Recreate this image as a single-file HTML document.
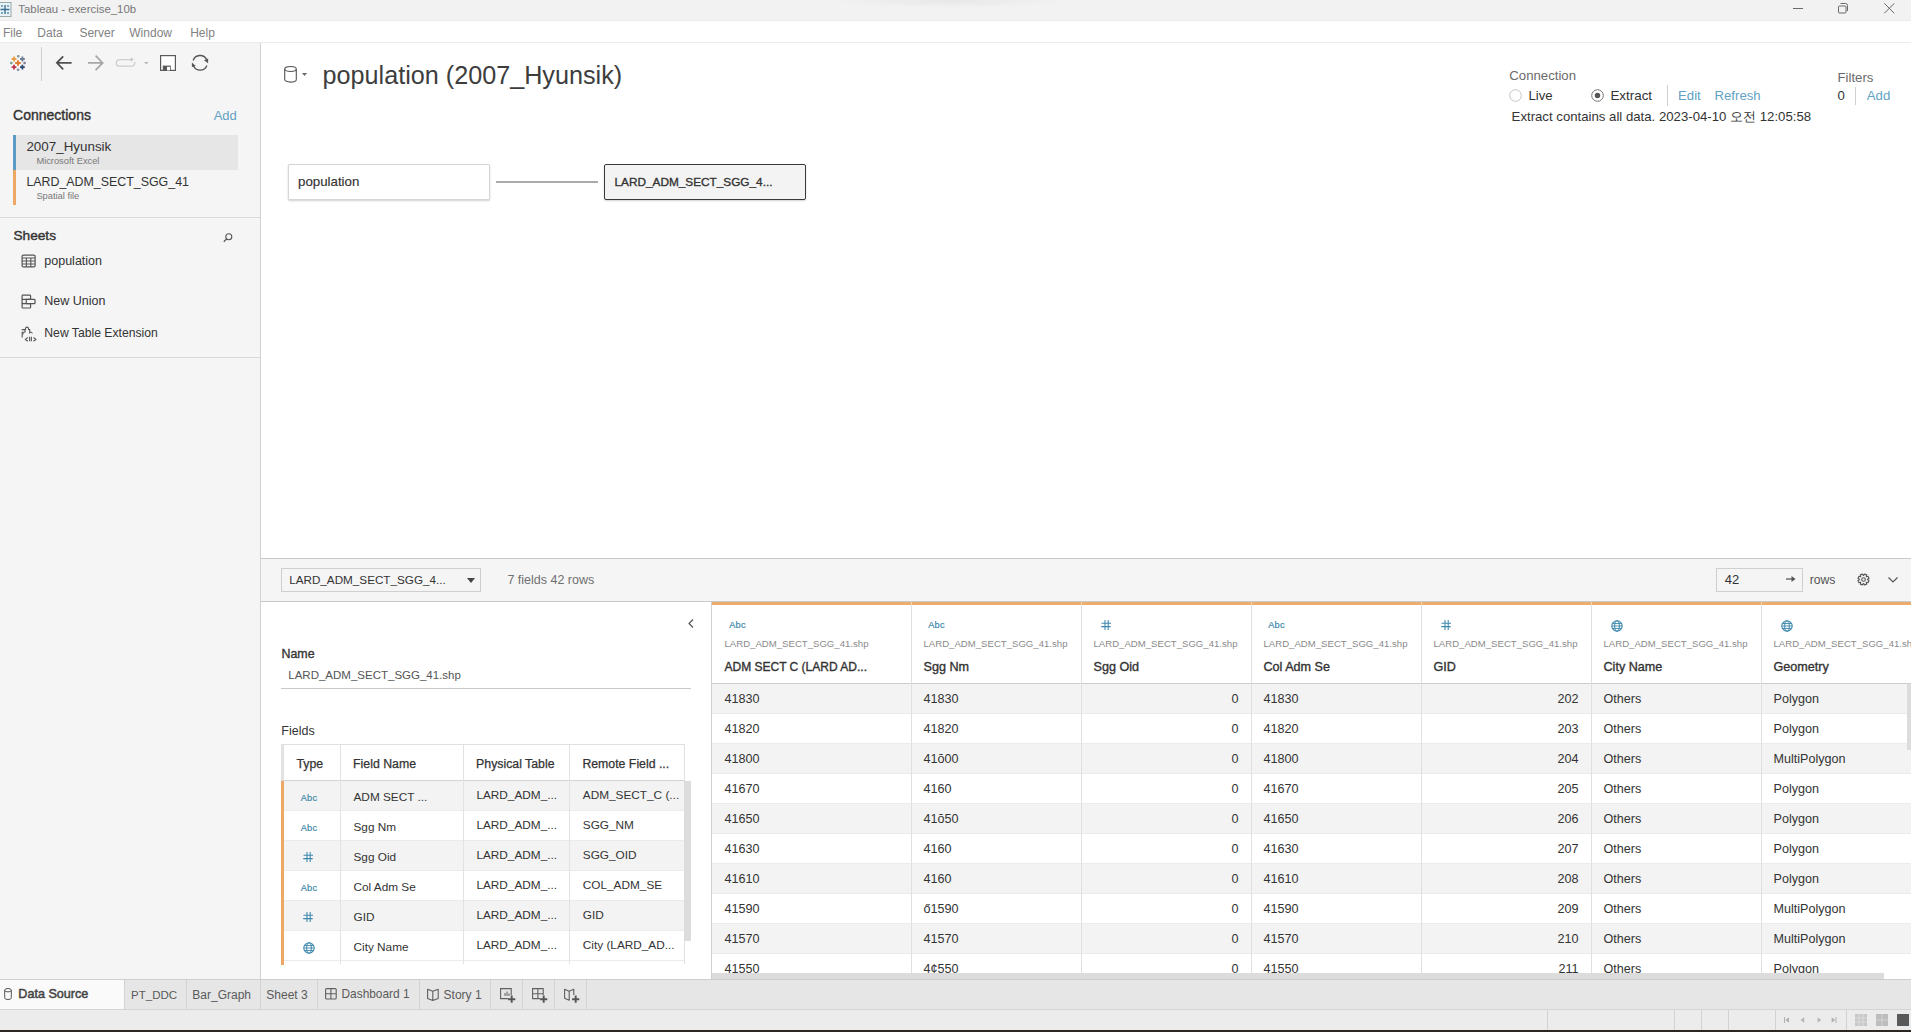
<!DOCTYPE html>
<html><head><meta charset="utf-8">
<style>
*{box-sizing:border-box;margin:0;padding:0}
html,body{width:1911px;height:1032px;overflow:hidden;background:#fff;font-family:"Liberation Sans",sans-serif;color:#333}
.a{position:absolute;white-space:nowrap}
svg.a{overflow:visible}
</style></head>
<body>

<div class="a" style="left:0px;top:0px;width:1911px;height:21px;background:#f2f2f2"></div>
<div class="a" style="left:830px;top:-6px;width:240px;height:14px;border-radius:50%;background:radial-gradient(ellipse at center, rgba(0,0,0,0.045), rgba(0,0,0,0) 70%)"></div>
<div class="a" style="left:0px;top:20px;width:1911px;height:1px;background:#ececec"></div>
<svg class="a" style="left:0px;top:2px;" width="12" height="16" viewBox="0 0 12 16"><rect x="-2" y="0.5" width="13" height="14" fill="#e6f2f8" stroke="#9aa" stroke-width="1"/><g stroke="#3d6f91" stroke-width="1.4"><path d="M5 3v9M0.5 7.5h9"/></g><g fill="#5a8fb0"><circle cx="2" cy="4" r="1"/><circle cx="8" cy="4" r="1"/><circle cx="2" cy="11" r="1"/><circle cx="8" cy="11" r="1"/></g></svg>
<div class="a" style="left:18.3px;top:4.35px;font-size:11.4px;line-height:11.4px;font-weight:400;color:#777;">Tableau - exercise_10b</div>
<div class="a" style="left:1793px;top:8px;width:10px;height:1px;background:#6a6a6a"></div>
<svg class="a" style="left:1837px;top:3px;" width="12" height="11" viewBox="0 0 12 11"><rect x="1.5" y="3" width="7.5" height="7" rx="1" fill="none" stroke="#6a6a6a" stroke-width="1"/><path d="M3.5 0.5h5a2 2 0 0 1 2 2v5.5" fill="none" stroke="#6a6a6a" stroke-width="1"/></svg>
<svg class="a" style="left:1884px;top:3px;" width="11" height="11" viewBox="0 0 11 11"><path d="M0.3 0.3l10 10M10.3 0.3l-10 10" stroke="#6a6a6a" stroke-width="1"/></svg>
<div class="a" style="left:0px;top:21px;width:1911px;height:21px;background:#fff"></div>
<div class="a" style="left:0px;top:42px;width:1911px;height:1px;background:#ebebeb"></div>
<div class="a" style="left:2.9px;top:26.54px;font-size:12px;line-height:12px;font-weight:400;color:#828282;">File</div>
<div class="a" style="left:37.3px;top:26.54px;font-size:12px;line-height:12px;font-weight:400;color:#828282;">Data</div>
<div class="a" style="left:79.4px;top:26.54px;font-size:12px;line-height:12px;font-weight:400;color:#828282;">Server</div>
<div class="a" style="left:129.3px;top:26.54px;font-size:12px;line-height:12px;font-weight:400;color:#828282;">Window</div>
<div class="a" style="left:190.2px;top:26.54px;font-size:12px;line-height:12px;font-weight:400;color:#828282;">Help</div>
<div class="a" style="left:0px;top:43px;width:260px;height:936px;background:#f5f5f5"></div>
<div class="a" style="left:260px;top:43px;width:1px;height:936px;background:#d2d2d2"></div>
<svg class="a" style="left:9px;top:54px;" width="18" height="18" viewBox="0 0 18 18"><path d="M6.2 9h5.6M9 6.2v5.6" stroke="#e07a30" stroke-width="1.9"/><path d="M2.6 5h4.8M5 2.6v4.8" stroke="#eaa046" stroke-width="1.8"/><path d="M11.0 5h4.8M13.4 2.6v4.8" stroke="#6b8196" stroke-width="1.8"/><path d="M2.6 13.2h4.8M5 10.799999999999999v4.8" stroke="#c2344d" stroke-width="1.8"/><path d="M11.0 13.2h4.8M13.4 10.799999999999999v4.8" stroke="#2e4a73" stroke-width="1.8"/><path d="M8.0 2.3h2.6M9.3 0.9999999999999998v2.6" stroke="#7c9aa0" stroke-width="1.5"/><path d="M0.9999999999999998 9h2.6M2.3 7.7v2.6" stroke="#7d9a92" stroke-width="1.5"/><path d="M14.299999999999999 9h2.6M15.6 7.7v2.6" stroke="#857d95" stroke-width="1.5"/><path d="M7.8 15.8h2.6M9.1 14.5v2.6" stroke="#8a8fa2" stroke-width="1.5"/></svg>
<div class="a" style="left:41px;top:47px;width:1px;height:34px;background:#cfcfcf"></div>
<svg class="a" style="left:55px;top:55px;" width="18" height="16" viewBox="0 0 18 16"><path d="M2 7.8h14.6M8.2 1.3L1.9 7.8l6.3 6.5" fill="none" stroke="#505050" stroke-width="1.8"/></svg>
<svg class="a" style="left:87px;top:54px;" width="18" height="18" viewBox="0 0 18 18"><path d="M1 8.9h14.6M8.6 1.6l7.1 7.3-7.1 7.3" fill="none" stroke="#a6a6a6" stroke-width="1.7"/></svg>
<svg class="a" style="left:115px;top:57px;" width="22" height="11" viewBox="0 0 22 11"><path d="M16.5 2.6H4.6a3.3 3.3 0 0 0 0 6.6h11.8a3.3 3.3 0 0 0 3.2-4.4" fill="none" stroke="#cdcdcd" stroke-width="1.3"/><path d="M15.8 0.4l3 2.2-3 2.2z" fill="#c4c4c4"/></svg>
<svg class="a" style="left:144px;top:62px;" width="5" height="3" viewBox="0 0 5 3"><path d="M0 0h4.6l-2.3 2.6z" fill="#b8b8b8"/></svg>
<svg class="a" style="left:160px;top:55px;" width="16" height="16" viewBox="0 0 16 16"><rect x="0.6" y="0.6" width="14.8" height="14.8" fill="#fff" stroke="#5a5a5a" stroke-width="1.2"/><rect x="2.8" y="10.6" width="8" height="5" fill="#5a5a5a"/><rect x="7" y="11.8" width="3" height="3.6" fill="#fff"/></svg>
<svg class="a" style="left:191px;top:55px;" width="18" height="17" viewBox="0 0 18 17"><path d="M2.1 5.5A7.3 7.3 0 0 1 15.6 4.6" fill="none" stroke="#555" stroke-width="1.3"/><path d="M15.9 10.5A7.3 7.3 0 0 1 2.3 10.6" fill="none" stroke="#555" stroke-width="1.3"/><path d="M13 5.2L17.1 3.6 17.1 8.2z" fill="#555"/><path d="M0.9 7.6v4.4l3.8-1z" fill="#555"/></svg>
<div class="a" style="left:13.1px;top:107.85px;font-size:14px;line-height:14px;font-weight:400;color:#333;-webkit-text-stroke:0.35px #333;-webkit-text-stroke:0.4px #333">Connections</div>
<div class="a" style="left:213.7px;top:109.40px;font-size:13px;line-height:13px;font-weight:400;color:#62a2c4;">Add</div>
<div class="a" style="left:16px;top:135px;width:222px;height:35px;background:#e6e6e6"></div>
<div class="a" style="left:13px;top:135px;width:3px;height:35px;background:#5b9bc4"></div>
<div class="a" style="left:13px;top:170px;width:3px;height:35px;background:#eda865"></div>
<div class="a" style="left:26.4px;top:139.56px;font-size:13.4px;line-height:13.4px;font-weight:400;color:#333;">2007_Hyunsik</div>
<div class="a" style="left:36.4px;top:156.83px;font-size:9.3px;line-height:9.3px;font-weight:400;color:#777;">Microsoft Excel</div>
<div class="a" style="left:26.4px;top:175.80px;font-size:12.4px;line-height:12.4px;font-weight:400;color:#333;">LARD_ADM_SECT_SGG_41</div>
<div class="a" style="left:36.4px;top:191.53px;font-size:9.3px;line-height:9.3px;font-weight:400;color:#777;">Spatial file</div>
<div class="a" style="left:0px;top:217px;width:260px;height:1px;background:#d9d9d9"></div>
<div class="a" style="left:13.4px;top:229.20px;font-size:13.7px;line-height:13.7px;font-weight:400;color:#333;-webkit-text-stroke:0.35px #333;-webkit-text-stroke:0.4px #333">Sheets</div>
<svg class="a" style="left:223px;top:233px;" width="10" height="10" viewBox="0 0 10 10"><circle cx="5.8" cy="3.8" r="3" fill="none" stroke="#555" stroke-width="1.1"/><path d="M3.7 5.9L0.8 8.8" stroke="#555" stroke-width="1.3"/></svg>
<svg class="a" style="left:21px;top:254px;" width="15" height="14" viewBox="0 0 15 14"><rect x="1.1" y="1.1" width="13" height="11.8" rx="1.2" fill="none" stroke="#555" stroke-width="1.2"/><path d="M1.1 4h13M1.1 7h13M1.1 10h13M5.4 4v9M9.8 4v9" stroke="#555" stroke-width="1.1"/></svg>
<div class="a" style="left:44.3px;top:254.52px;font-size:12.5px;line-height:12.5px;font-weight:400;color:#333;">population</div>
<svg class="a" style="left:21px;top:294px;" width="16" height="15" viewBox="0 0 16 15"><rect x="1.1" y="1.1" width="8.5" height="4.3" rx="0.8" fill="none" stroke="#555" stroke-width="1.2"/><rect x="5.2" y="5.4" width="8.8" height="4.3" rx="0.8" fill="none" stroke="#555" stroke-width="1.2"/><rect x="1.1" y="9.7" width="8.5" height="4.3" rx="0.8" fill="none" stroke="#555" stroke-width="1.2"/><path d="M1.1 5v5" stroke="#555" stroke-width="1.2"/></svg>
<div class="a" style="left:44.3px;top:295.42px;font-size:12.5px;line-height:12.5px;font-weight:400;color:#333;">New Union</div>
<svg class="a" style="left:21px;top:326px;" width="17" height="16" viewBox="0 0 17 16"><path d="M1.2 11.5V6.2h1.8a1.2 1.2 0 0 0 0-2.4H1.2V3.5h3.3V2.6a1.5 1.5 0 0 1 3 0v0.9h1.2V7" fill="none" stroke="#555" stroke-width="1.1"/><path d="M1.2 7.8h1.6M8.7 7.5a1.3 1.3 0 0 1 2.6 0" fill="none" stroke="#555" stroke-width="1"/><path d="M6.8 11.5l-2.4 1.9 2.4 1.9M12.5 11.5l2.4 1.9-2.4 1.9M8.6 10.8v4.4M10.4 10.8v4.4" fill="none" stroke="#555" stroke-width="1.1"/></svg>
<div class="a" style="left:44.3px;top:326.67px;font-size:12.2px;line-height:12.2px;font-weight:400;color:#333;">New Table Extension</div>
<div class="a" style="left:0px;top:357px;width:260px;height:1px;background:#d9d9d9"></div>
<svg class="a" style="left:284px;top:66px;" width="14" height="18" viewBox="0 0 14 18"><ellipse cx="6.5" cy="3" rx="5.8" ry="2.5" fill="none" stroke="#555" stroke-width="1.1"/><path d="M0.7 3v10.5a5.8 2.6 0 0 0 11.6 0V3" fill="none" stroke="#555" stroke-width="1.1"/></svg>
<svg class="a" style="left:302px;top:73px;" width="6" height="4" viewBox="0 0 6 4"><path d="M0 0h5l-2.5 3z" fill="#666"/></svg>
<div class="a" style="left:322.5px;top:62.67px;font-size:25.2px;line-height:25.2px;font-weight:400;color:#3d3d3d;">population (2007_Hyunsik)</div>
<div class="a" style="left:288px;top:164px;width:202px;height:36px;background:#fff;border:1px solid #d6d6d6;border-radius:1px;box-shadow:0 1px 2px rgba(0,0,0,0.18)"></div>
<div class="a" style="left:298px;top:174.74px;font-size:13.3px;line-height:13.3px;font-weight:400;color:#333;-webkit-text-stroke:0.35px #333;-webkit-text-stroke:0.15px #333">population</div>
<div class="a" style="left:496px;top:181px;width:102px;height:2px;background:#ababab"></div>
<div class="a" style="left:604px;top:164px;width:202px;height:36px;background:#f3f3f3;border:1px solid #3a3a3a;border-radius:2px;box-shadow:0 1px 2px rgba(0,0,0,0.18)"></div>
<div class="a" style="left:614.5px;top:177.01px;font-size:11.8px;line-height:11.8px;font-weight:400;color:#333;-webkit-text-stroke:0.35px #333;">LARD_ADM_SECT_SGG_4...</div>
<div class="a" style="left:1509.3px;top:68.83px;font-size:13.2px;line-height:13.2px;font-weight:400;color:#6a6a6a;">Connection</div>
<svg class="a" style="left:1509px;top:89px;" width="13" height="13" viewBox="0 0 13 13"><circle cx="6.5" cy="6.5" r="5.8" fill="#fff" stroke="#c4c4c4" stroke-width="1"/></svg>
<div class="a" style="left:1528.5px;top:88.83px;font-size:13.2px;line-height:13.2px;font-weight:400;color:#333;">Live</div>
<svg class="a" style="left:1591px;top:89px;" width="13" height="13" viewBox="0 0 13 13"><circle cx="6.5" cy="6.5" r="5.8" fill="#fff" stroke="#777" stroke-width="1"/><circle cx="6.5" cy="6.5" r="2.7" fill="#555"/></svg>
<div class="a" style="left:1610.4px;top:88.66px;font-size:13.4px;line-height:13.4px;font-weight:400;color:#333;">Extract</div>
<div class="a" style="left:1667px;top:85px;width:1px;height:21px;background:#d0d0d0"></div>
<div class="a" style="left:1678px;top:88.83px;font-size:13.2px;line-height:13.2px;font-weight:400;color:#62a2c4;">Edit</div>
<div class="a" style="left:1714.5px;top:88.83px;font-size:13.2px;line-height:13.2px;font-weight:400;color:#62a2c4;">Refresh</div>
<div class="a" style="left:1511.6px;top:109.83px;font-size:13.2px;line-height:13.2px;font-weight:400;color:#333;">Extract contains all data. 2023-04-10 오전 12:05:58</div>
<div class="a" style="left:1837.5px;top:71.13px;font-size:13.2px;line-height:13.2px;font-weight:400;color:#6a6a6a;">Filters</div>
<div class="a" style="left:1837.5px;top:88.83px;font-size:13.2px;line-height:13.2px;font-weight:400;color:#333;">0</div>
<div class="a" style="left:1855px;top:87px;width:1px;height:18px;background:#d0d0d0"></div>
<div class="a" style="left:1866.8px;top:88.83px;font-size:13.2px;line-height:13.2px;font-weight:400;color:#62a2c4;">Add</div>
<div class="a" style="left:261px;top:558px;width:1650px;height:44px;background:#f5f5f5"></div>
<div class="a" style="left:261px;top:558px;width:1650px;height:1px;background:#c9c9c9"></div>
<div class="a" style="left:261px;top:601px;width:1650px;height:1px;background:#c9c9c9"></div>
<div class="a" style="left:281px;top:568px;width:200px;height:24px;background:#f5f5f5;border:1px solid #cfcfcf"></div>
<div class="a" style="left:289.2px;top:574.30px;font-size:11.7px;line-height:11.7px;font-weight:400;color:#333;">LARD_ADM_SECT_SGG_4...</div>
<svg class="a" style="left:467px;top:578px;" width="8" height="5" viewBox="0 0 8 5"><path d="M0 0h8l-4 5z" fill="#444"/></svg>
<div class="a" style="left:507.4px;top:573.62px;font-size:12.5px;line-height:12.5px;font-weight:400;color:#707070;">7 fields 42 rows</div>
<div class="a" style="left:1716px;top:568px;width:87px;height:24px;background:#f5f5f5;border:1px solid #cfcfcf"></div>
<div class="a" style="left:1724.7px;top:572.80px;font-size:13px;line-height:13px;font-weight:400;color:#333;">42</div>
<svg class="a" style="left:1786px;top:575px;" width="10" height="8" viewBox="0 0 10 8"><path d="M0 4h6" stroke="#666" stroke-width="1.4"/><path d="M5.5 1l4 3-4 3z" fill="#555"/></svg>
<div class="a" style="left:1809.7px;top:573.67px;font-size:12.2px;line-height:12.2px;font-weight:400;color:#555;">rows</div>
<svg class="a" style="left:1856.5px;top:573px;" width="13" height="13" viewBox="0 0 13 13"><path d="M10.60 6.69 L12.00 7.53 L11.12 9.66 L9.53 9.26 L9.26 9.53 L9.66 11.12 L7.53 12.00 L6.69 10.60 L6.31 10.60 L5.47 12.00 L3.34 11.12 L3.74 9.53 L3.47 9.26 L1.88 9.66 L1.00 7.53 L2.40 6.69 L2.40 6.31 L1.00 5.47 L1.88 3.34 L3.47 3.74 L3.74 3.47 L3.34 1.88 L5.47 1.00 L6.31 2.40 L6.69 2.40 L7.53 1.00 L9.66 1.88 L9.26 3.47 L9.53 3.74 L11.12 3.34 L12.00 5.47 L10.60 6.31Z" fill="none" stroke="#555" stroke-width="1.1" stroke-linejoin="round"/><circle cx="6.5" cy="6.5" r="1.8" fill="none" stroke="#555" stroke-width="1.1"/></svg>
<svg class="a" style="left:1888px;top:577px;" width="10" height="6" viewBox="0 0 10 6"><path d="M0.5 0.5l4.5 4.5 4.5-4.5" fill="none" stroke="#555" stroke-width="1.2"/></svg>
<div class="a" style="left:261px;top:602px;width:450px;height:377px;background:#fff"></div>
<div class="a" style="left:711px;top:602px;width:1px;height:377px;background:#d0d0d0"></div>
<svg class="a" style="left:688px;top:619px;" width="6" height="9" viewBox="0 0 6 9"><path d="M5 0.5L1 4.5l4 4" fill="none" stroke="#555" stroke-width="1.2"/></svg>
<div class="a" style="left:281.5px;top:647.50px;font-size:12.4px;line-height:12.4px;font-weight:400;color:#333;-webkit-text-stroke:0.35px #333;">Name</div>
<div class="a" style="left:288.3px;top:670.27px;font-size:11.5px;line-height:11.5px;font-weight:400;color:#555;">LARD_ADM_SECT_SGG_41.shp</div>
<div class="a" style="left:281px;top:688px;width:410px;height:1px;background:#c8c8c8"></div>
<div class="a" style="left:281.3px;top:724.52px;font-size:12.5px;line-height:12.5px;font-weight:400;color:#333;">Fields</div>
<div class="a" style="left:281px;top:744px;width:404px;height:220px;background:#fff;border-top:1px solid #e0e0e0;border-right:1px solid #e0e0e0"></div>
<div class="a" style="left:281px;top:744px;width:3px;height:36px;background:#e2e2e2"></div>
<div class="a" style="left:281px;top:780px;width:404px;height:1px;background:#d4d4d4"></div>
<div class="a" style="left:284px;top:781px;width:400px;height:30px;background:#f3f3f3"></div>
<div class="a" style="left:284px;top:810px;width:400px;height:1px;background:#ebebeb"></div>
<div class="a" style="left:284px;top:840px;width:400px;height:1px;background:#ebebeb"></div>
<div class="a" style="left:284px;top:841px;width:400px;height:30px;background:#f3f3f3"></div>
<div class="a" style="left:284px;top:870px;width:400px;height:1px;background:#ebebeb"></div>
<div class="a" style="left:284px;top:900px;width:400px;height:1px;background:#ebebeb"></div>
<div class="a" style="left:284px;top:901px;width:400px;height:30px;background:#f3f3f3"></div>
<div class="a" style="left:284px;top:930px;width:400px;height:1px;background:#ebebeb"></div>
<div class="a" style="left:284px;top:960px;width:400px;height:1px;background:#ebebeb"></div>
<div class="a" style="left:340px;top:744px;width:1px;height:220px;background:#e2e2e2"></div>
<div class="a" style="left:463px;top:744px;width:1px;height:220px;background:#e2e2e2"></div>
<div class="a" style="left:569px;top:744px;width:1px;height:220px;background:#e2e2e2"></div>
<div class="a" style="left:281px;top:781px;width:3px;height:184px;background:#eda865"></div>
<div class="a" style="left:296.5px;top:757.99px;font-size:12.3px;line-height:12.3px;font-weight:400;color:#333;-webkit-text-stroke:0.35px #333;-webkit-text-stroke:0.25px #333">Type</div>
<div class="a" style="left:353.1px;top:757.99px;font-size:12.3px;line-height:12.3px;font-weight:400;color:#333;-webkit-text-stroke:0.35px #333;-webkit-text-stroke:0.25px #333">Field Name</div>
<div class="a" style="left:476.1px;top:757.99px;font-size:12.3px;line-height:12.3px;font-weight:400;color:#333;-webkit-text-stroke:0.35px #333;-webkit-text-stroke:0.25px #333">Physical Table</div>
<div class="a" style="left:582.4px;top:757.99px;font-size:12.3px;line-height:12.3px;font-weight:400;color:#333;-webkit-text-stroke:0.35px #333;-webkit-text-stroke:0.25px #333">Remote Field ...</div>
<div class="a" style="left:294px;width:30px;text-align:center;top:793.61px;font-size:9.2px;line-height:9.2px;color:#4189ab;letter-spacing:0.25px;-webkit-text-stroke:0.2px #4189ab">Abc</div>
<div class="a" style="left:353.5px;top:792.01px;font-size:11.8px;line-height:11.8px;font-weight:400;color:#333;">ADM SECT ...</div>
<div class="a" style="left:476.4px;top:790.01px;font-size:11.8px;line-height:11.8px;font-weight:400;color:#333;">LARD_ADM_...</div>
<div class="a" style="left:582.8px;top:790.01px;font-size:11.8px;line-height:11.8px;font-weight:400;color:#333;">ADM_SECT_C (...</div>
<div class="a" style="left:294px;width:30px;text-align:center;top:823.61px;font-size:9.2px;line-height:9.2px;color:#4189ab;letter-spacing:0.25px;-webkit-text-stroke:0.2px #4189ab">Abc</div>
<div class="a" style="left:353.5px;top:822.01px;font-size:11.8px;line-height:11.8px;font-weight:400;color:#333;">Sgg Nm</div>
<div class="a" style="left:476.4px;top:820.01px;font-size:11.8px;line-height:11.8px;font-weight:400;color:#333;">LARD_ADM_...</div>
<div class="a" style="left:582.8px;top:820.01px;font-size:11.8px;line-height:11.8px;font-weight:400;color:#333;">SGG_NM</div>
<svg class="a" style="left:303px;top:852.0px;" width="10" height="10" viewBox="0 0 10 10"><path d="M4 0v10M7.2 0v10M0.5 3.2h9.5M0.2 6.6h9.5" stroke="#3d88ad" stroke-width="1.05" fill="none"/></svg>
<div class="a" style="left:353.5px;top:852.01px;font-size:11.8px;line-height:11.8px;font-weight:400;color:#333;">Sgg Oid</div>
<div class="a" style="left:476.4px;top:850.01px;font-size:11.8px;line-height:11.8px;font-weight:400;color:#333;">LARD_ADM_...</div>
<div class="a" style="left:582.8px;top:850.01px;font-size:11.8px;line-height:11.8px;font-weight:400;color:#333;">SGG_OID</div>
<div class="a" style="left:294px;width:30px;text-align:center;top:883.61px;font-size:9.2px;line-height:9.2px;color:#4189ab;letter-spacing:0.25px;-webkit-text-stroke:0.2px #4189ab">Abc</div>
<div class="a" style="left:353.5px;top:882.01px;font-size:11.8px;line-height:11.8px;font-weight:400;color:#333;">Col Adm Se</div>
<div class="a" style="left:476.4px;top:880.01px;font-size:11.8px;line-height:11.8px;font-weight:400;color:#333;">LARD_ADM_...</div>
<div class="a" style="left:582.8px;top:880.01px;font-size:11.8px;line-height:11.8px;font-weight:400;color:#333;">COL_ADM_SE</div>
<svg class="a" style="left:303px;top:912.0px;" width="10" height="10" viewBox="0 0 10 10"><path d="M4 0v10M7.2 0v10M0.5 3.2h9.5M0.2 6.6h9.5" stroke="#3d88ad" stroke-width="1.05" fill="none"/></svg>
<div class="a" style="left:353.5px;top:912.01px;font-size:11.8px;line-height:11.8px;font-weight:400;color:#333;">GID</div>
<div class="a" style="left:476.4px;top:910.01px;font-size:11.8px;line-height:11.8px;font-weight:400;color:#333;">LARD_ADM_...</div>
<div class="a" style="left:582.8px;top:910.01px;font-size:11.8px;line-height:11.8px;font-weight:400;color:#333;">GID</div>
<svg class="a" style="left:303px;top:941.5px;" width="12" height="12" viewBox="0 0 12 12"><circle cx="6" cy="6" r="5.2" fill="none" stroke="#3d88ad" stroke-width="1.1"/><ellipse cx="6" cy="6" rx="2.3" ry="5.2" fill="none" stroke="#3d88ad" stroke-width="1"/><path d="M0.8 6h10.4M1.6 3.5h8.8M1.6 8.5h8.8" stroke="#3d88ad" stroke-width="0.9"/></svg>
<div class="a" style="left:353.5px;top:942.01px;font-size:11.8px;line-height:11.8px;font-weight:400;color:#333;">City Name</div>
<div class="a" style="left:476.4px;top:940.01px;font-size:11.8px;line-height:11.8px;font-weight:400;color:#333;">LARD_ADM_...</div>
<div class="a" style="left:582.8px;top:940.01px;font-size:11.8px;line-height:11.8px;font-weight:400;color:#333;">City (LARD_AD...</div>
<div class="a" style="left:684px;top:781px;width:7px;height:160px;background:#dcdcdc"></div>
<div class="a" style="left:712px;top:602px;width:1199px;height:377px;background:#fff"></div>
<div class="a" style="left:712px;top:602px;width:1199px;height:3px;background:#edac6c"></div>
<div class="a" style="left:712px;top:684px;width:1199px;height:30px;background:#f3f3f3"></div>
<div class="a" style="left:712px;top:713px;width:1199px;height:1px;background:#ebebeb"></div>
<div class="a" style="left:712px;top:743px;width:1199px;height:1px;background:#ebebeb"></div>
<div class="a" style="left:712px;top:744px;width:1199px;height:30px;background:#f3f3f3"></div>
<div class="a" style="left:712px;top:773px;width:1199px;height:1px;background:#ebebeb"></div>
<div class="a" style="left:712px;top:803px;width:1199px;height:1px;background:#ebebeb"></div>
<div class="a" style="left:712px;top:804px;width:1199px;height:30px;background:#f3f3f3"></div>
<div class="a" style="left:712px;top:833px;width:1199px;height:1px;background:#ebebeb"></div>
<div class="a" style="left:712px;top:863px;width:1199px;height:1px;background:#ebebeb"></div>
<div class="a" style="left:712px;top:864px;width:1199px;height:30px;background:#f3f3f3"></div>
<div class="a" style="left:712px;top:893px;width:1199px;height:1px;background:#ebebeb"></div>
<div class="a" style="left:712px;top:923px;width:1199px;height:1px;background:#ebebeb"></div>
<div class="a" style="left:712px;top:924px;width:1199px;height:30px;background:#f3f3f3"></div>
<div class="a" style="left:712px;top:953px;width:1199px;height:1px;background:#ebebeb"></div>
<div class="a" style="left:712px;top:983px;width:1199px;height:1px;background:#ebebeb"></div>
<div class="a" style="left:712px;top:683px;width:1199px;height:1px;background:#cdcdcd"></div>
<div class="a" style="left:911px;top:605px;width:1px;height:374px;background:#e0e0e0"></div>
<div class="a" style="left:911px;top:602px;width:1px;height:3px;background:#f8d7a8"></div>
<div class="a" style="left:1081px;top:605px;width:1px;height:374px;background:#e0e0e0"></div>
<div class="a" style="left:1081px;top:602px;width:1px;height:3px;background:#f8d7a8"></div>
<div class="a" style="left:1251px;top:605px;width:1px;height:374px;background:#e0e0e0"></div>
<div class="a" style="left:1251px;top:602px;width:1px;height:3px;background:#f8d7a8"></div>
<div class="a" style="left:1421px;top:605px;width:1px;height:374px;background:#e0e0e0"></div>
<div class="a" style="left:1421px;top:602px;width:1px;height:3px;background:#f8d7a8"></div>
<div class="a" style="left:1591px;top:605px;width:1px;height:374px;background:#e0e0e0"></div>
<div class="a" style="left:1591px;top:602px;width:1px;height:3px;background:#f8d7a8"></div>
<div class="a" style="left:1761px;top:605px;width:1px;height:374px;background:#e0e0e0"></div>
<div class="a" style="left:1761px;top:602px;width:1px;height:3px;background:#f8d7a8"></div>
<div class="a" style="left:722.5px;width:30px;text-align:center;top:621.11px;font-size:9.2px;line-height:9.2px;color:#4189ab;letter-spacing:0.25px;-webkit-text-stroke:0.2px #4189ab">Abc</div>
<div class="a" style="left:724.5px;top:639.17px;font-size:9.6px;line-height:9.6px;font-weight:400;color:#8a8a8a;">LARD_ADM_SECT_SGG_41.shp</div>
<div class="a" style="left:724.5px;top:661.44px;font-size:12.0px;line-height:12.0px;font-weight:400;color:#333;-webkit-text-stroke:0.35px #333;">ADM SECT C (LARD AD...</div>
<div class="a" style="left:921.5px;width:30px;text-align:center;top:621.11px;font-size:9.2px;line-height:9.2px;color:#4189ab;letter-spacing:0.25px;-webkit-text-stroke:0.2px #4189ab">Abc</div>
<div class="a" style="left:923.5px;top:639.17px;font-size:9.6px;line-height:9.6px;font-weight:400;color:#8a8a8a;">LARD_ADM_SECT_SGG_41.shp</div>
<div class="a" style="left:923.5px;top:660.93px;font-size:12.6px;line-height:12.6px;font-weight:400;color:#333;-webkit-text-stroke:0.35px #333;">Sgg Nm</div>
<svg class="a" style="left:1100.5px;top:620.0px;" width="10" height="10" viewBox="0 0 10 10"><path d="M4 0v10M7.2 0v10M0.5 3.2h9.5M0.2 6.6h9.5" stroke="#3d88ad" stroke-width="1.05" fill="none"/></svg>
<div class="a" style="left:1093.5px;top:639.17px;font-size:9.6px;line-height:9.6px;font-weight:400;color:#8a8a8a;">LARD_ADM_SECT_SGG_41.shp</div>
<div class="a" style="left:1093.5px;top:660.93px;font-size:12.6px;line-height:12.6px;font-weight:400;color:#333;-webkit-text-stroke:0.35px #333;">Sgg Oid</div>
<div class="a" style="left:1261.5px;width:30px;text-align:center;top:621.11px;font-size:9.2px;line-height:9.2px;color:#4189ab;letter-spacing:0.25px;-webkit-text-stroke:0.2px #4189ab">Abc</div>
<div class="a" style="left:1263.5px;top:639.17px;font-size:9.6px;line-height:9.6px;font-weight:400;color:#8a8a8a;">LARD_ADM_SECT_SGG_41.shp</div>
<div class="a" style="left:1263.5px;top:660.93px;font-size:12.6px;line-height:12.6px;font-weight:400;color:#333;-webkit-text-stroke:0.35px #333;">Col Adm Se</div>
<svg class="a" style="left:1440.5px;top:620.0px;" width="10" height="10" viewBox="0 0 10 10"><path d="M4 0v10M7.2 0v10M0.5 3.2h9.5M0.2 6.6h9.5" stroke="#3d88ad" stroke-width="1.05" fill="none"/></svg>
<div class="a" style="left:1433.5px;top:639.17px;font-size:9.6px;line-height:9.6px;font-weight:400;color:#8a8a8a;">LARD_ADM_SECT_SGG_41.shp</div>
<div class="a" style="left:1433.5px;top:660.93px;font-size:12.6px;line-height:12.6px;font-weight:400;color:#333;-webkit-text-stroke:0.35px #333;">GID</div>
<svg class="a" style="left:1610.5px;top:619.5px;" width="12" height="12" viewBox="0 0 12 12"><circle cx="6" cy="6" r="5.2" fill="none" stroke="#3d88ad" stroke-width="1.1"/><ellipse cx="6" cy="6" rx="2.3" ry="5.2" fill="none" stroke="#3d88ad" stroke-width="1"/><path d="M0.8 6h10.4M1.6 3.5h8.8M1.6 8.5h8.8" stroke="#3d88ad" stroke-width="0.9"/></svg>
<div class="a" style="left:1603.5px;top:639.17px;font-size:9.6px;line-height:9.6px;font-weight:400;color:#8a8a8a;">LARD_ADM_SECT_SGG_41.shp</div>
<div class="a" style="left:1603.5px;top:660.93px;font-size:12.6px;line-height:12.6px;font-weight:400;color:#333;-webkit-text-stroke:0.35px #333;">City Name</div>
<svg class="a" style="left:1780.5px;top:619.5px;" width="12" height="12" viewBox="0 0 12 12"><circle cx="6" cy="6" r="5.2" fill="none" stroke="#3d88ad" stroke-width="1.1"/><ellipse cx="6" cy="6" rx="2.3" ry="5.2" fill="none" stroke="#3d88ad" stroke-width="1"/><path d="M0.8 6h10.4M1.6 3.5h8.8M1.6 8.5h8.8" stroke="#3d88ad" stroke-width="0.9"/></svg>
<div class="a" style="left:1773.5px;top:639.17px;font-size:9.6px;line-height:9.6px;font-weight:400;color:#8a8a8a;">LARD_ADM_SECT_SGG_41.shp</div>
<div class="a" style="left:1773.5px;top:660.93px;font-size:12.6px;line-height:12.6px;font-weight:400;color:#333;-webkit-text-stroke:0.35px #333;">Geometry</div>
<div class="a" style="left:724.5px;top:693.33px;font-size:12.6px;line-height:12.6px;font-weight:400;color:#333;">41830</div>
<div class="a" style="left:923.5px;top:693.33px;font-size:12.6px;line-height:12.6px;font-weight:400;color:#333;">41830</div>
<div class="a" style="right:672.5px;top:693.33px;font-size:12.6px;line-height:12.6px;font-weight:400;color:#333;text-align:right;">0</div>
<div class="a" style="left:1263.5px;top:693.33px;font-size:12.6px;line-height:12.6px;font-weight:400;color:#333;">41830</div>
<div class="a" style="right:332.5px;top:693.33px;font-size:12.6px;line-height:12.6px;font-weight:400;color:#333;text-align:right;">202</div>
<div class="a" style="left:1603.5px;top:693.33px;font-size:12.6px;line-height:12.6px;font-weight:400;color:#333;">Others</div>
<div class="a" style="left:1773.5px;top:693.33px;font-size:12.6px;line-height:12.6px;font-weight:400;color:#333;">Polygon</div>
<div class="a" style="left:724.5px;top:723.33px;font-size:12.6px;line-height:12.6px;font-weight:400;color:#333;">41820</div>
<div class="a" style="left:923.5px;top:723.33px;font-size:12.6px;line-height:12.6px;font-weight:400;color:#333;">41820</div>
<div class="a" style="right:672.5px;top:723.33px;font-size:12.6px;line-height:12.6px;font-weight:400;color:#333;text-align:right;">0</div>
<div class="a" style="left:1263.5px;top:723.33px;font-size:12.6px;line-height:12.6px;font-weight:400;color:#333;">41820</div>
<div class="a" style="right:332.5px;top:723.33px;font-size:12.6px;line-height:12.6px;font-weight:400;color:#333;text-align:right;">203</div>
<div class="a" style="left:1603.5px;top:723.33px;font-size:12.6px;line-height:12.6px;font-weight:400;color:#333;">Others</div>
<div class="a" style="left:1773.5px;top:723.33px;font-size:12.6px;line-height:12.6px;font-weight:400;color:#333;">Polygon</div>
<div class="a" style="left:724.5px;top:753.33px;font-size:12.6px;line-height:12.6px;font-weight:400;color:#333;">41800</div>
<div class="a" style="left:923.5px;top:753.33px;font-size:12.6px;line-height:12.6px;font-weight:400;color:#333;">41ŏ00</div>
<div class="a" style="right:672.5px;top:753.33px;font-size:12.6px;line-height:12.6px;font-weight:400;color:#333;text-align:right;">0</div>
<div class="a" style="left:1263.5px;top:753.33px;font-size:12.6px;line-height:12.6px;font-weight:400;color:#333;">41800</div>
<div class="a" style="right:332.5px;top:753.33px;font-size:12.6px;line-height:12.6px;font-weight:400;color:#333;text-align:right;">204</div>
<div class="a" style="left:1603.5px;top:753.33px;font-size:12.6px;line-height:12.6px;font-weight:400;color:#333;">Others</div>
<div class="a" style="left:1773.5px;top:753.33px;font-size:12.6px;line-height:12.6px;font-weight:400;color:#333;">MultiPolygon</div>
<div class="a" style="left:724.5px;top:783.33px;font-size:12.6px;line-height:12.6px;font-weight:400;color:#333;">41670</div>
<div class="a" style="left:923.5px;top:783.33px;font-size:12.6px;line-height:12.6px;font-weight:400;color:#333;">4160</div>
<div class="a" style="right:672.5px;top:783.33px;font-size:12.6px;line-height:12.6px;font-weight:400;color:#333;text-align:right;">0</div>
<div class="a" style="left:1263.5px;top:783.33px;font-size:12.6px;line-height:12.6px;font-weight:400;color:#333;">41670</div>
<div class="a" style="right:332.5px;top:783.33px;font-size:12.6px;line-height:12.6px;font-weight:400;color:#333;text-align:right;">205</div>
<div class="a" style="left:1603.5px;top:783.33px;font-size:12.6px;line-height:12.6px;font-weight:400;color:#333;">Others</div>
<div class="a" style="left:1773.5px;top:783.33px;font-size:12.6px;line-height:12.6px;font-weight:400;color:#333;">Polygon</div>
<div class="a" style="left:724.5px;top:813.33px;font-size:12.6px;line-height:12.6px;font-weight:400;color:#333;">41650</div>
<div class="a" style="left:923.5px;top:813.33px;font-size:12.6px;line-height:12.6px;font-weight:400;color:#333;">41ŏ50</div>
<div class="a" style="right:672.5px;top:813.33px;font-size:12.6px;line-height:12.6px;font-weight:400;color:#333;text-align:right;">0</div>
<div class="a" style="left:1263.5px;top:813.33px;font-size:12.6px;line-height:12.6px;font-weight:400;color:#333;">41650</div>
<div class="a" style="right:332.5px;top:813.33px;font-size:12.6px;line-height:12.6px;font-weight:400;color:#333;text-align:right;">206</div>
<div class="a" style="left:1603.5px;top:813.33px;font-size:12.6px;line-height:12.6px;font-weight:400;color:#333;">Others</div>
<div class="a" style="left:1773.5px;top:813.33px;font-size:12.6px;line-height:12.6px;font-weight:400;color:#333;">Polygon</div>
<div class="a" style="left:724.5px;top:843.33px;font-size:12.6px;line-height:12.6px;font-weight:400;color:#333;">41630</div>
<div class="a" style="left:923.5px;top:843.33px;font-size:12.6px;line-height:12.6px;font-weight:400;color:#333;">4160</div>
<div class="a" style="right:672.5px;top:843.33px;font-size:12.6px;line-height:12.6px;font-weight:400;color:#333;text-align:right;">0</div>
<div class="a" style="left:1263.5px;top:843.33px;font-size:12.6px;line-height:12.6px;font-weight:400;color:#333;">41630</div>
<div class="a" style="right:332.5px;top:843.33px;font-size:12.6px;line-height:12.6px;font-weight:400;color:#333;text-align:right;">207</div>
<div class="a" style="left:1603.5px;top:843.33px;font-size:12.6px;line-height:12.6px;font-weight:400;color:#333;">Others</div>
<div class="a" style="left:1773.5px;top:843.33px;font-size:12.6px;line-height:12.6px;font-weight:400;color:#333;">Polygon</div>
<div class="a" style="left:724.5px;top:873.33px;font-size:12.6px;line-height:12.6px;font-weight:400;color:#333;">41610</div>
<div class="a" style="left:923.5px;top:873.33px;font-size:12.6px;line-height:12.6px;font-weight:400;color:#333;">4160</div>
<div class="a" style="right:672.5px;top:873.33px;font-size:12.6px;line-height:12.6px;font-weight:400;color:#333;text-align:right;">0</div>
<div class="a" style="left:1263.5px;top:873.33px;font-size:12.6px;line-height:12.6px;font-weight:400;color:#333;">41610</div>
<div class="a" style="right:332.5px;top:873.33px;font-size:12.6px;line-height:12.6px;font-weight:400;color:#333;text-align:right;">208</div>
<div class="a" style="left:1603.5px;top:873.33px;font-size:12.6px;line-height:12.6px;font-weight:400;color:#333;">Others</div>
<div class="a" style="left:1773.5px;top:873.33px;font-size:12.6px;line-height:12.6px;font-weight:400;color:#333;">Polygon</div>
<div class="a" style="left:724.5px;top:903.33px;font-size:12.6px;line-height:12.6px;font-weight:400;color:#333;">41590</div>
<div class="a" style="left:923.5px;top:903.33px;font-size:12.6px;line-height:12.6px;font-weight:400;color:#333;">ő1590</div>
<div class="a" style="right:672.5px;top:903.33px;font-size:12.6px;line-height:12.6px;font-weight:400;color:#333;text-align:right;">0</div>
<div class="a" style="left:1263.5px;top:903.33px;font-size:12.6px;line-height:12.6px;font-weight:400;color:#333;">41590</div>
<div class="a" style="right:332.5px;top:903.33px;font-size:12.6px;line-height:12.6px;font-weight:400;color:#333;text-align:right;">209</div>
<div class="a" style="left:1603.5px;top:903.33px;font-size:12.6px;line-height:12.6px;font-weight:400;color:#333;">Others</div>
<div class="a" style="left:1773.5px;top:903.33px;font-size:12.6px;line-height:12.6px;font-weight:400;color:#333;">MultiPolygon</div>
<div class="a" style="left:724.5px;top:933.33px;font-size:12.6px;line-height:12.6px;font-weight:400;color:#333;">41570</div>
<div class="a" style="left:923.5px;top:933.33px;font-size:12.6px;line-height:12.6px;font-weight:400;color:#333;">41570</div>
<div class="a" style="right:672.5px;top:933.33px;font-size:12.6px;line-height:12.6px;font-weight:400;color:#333;text-align:right;">0</div>
<div class="a" style="left:1263.5px;top:933.33px;font-size:12.6px;line-height:12.6px;font-weight:400;color:#333;">41570</div>
<div class="a" style="right:332.5px;top:933.33px;font-size:12.6px;line-height:12.6px;font-weight:400;color:#333;text-align:right;">210</div>
<div class="a" style="left:1603.5px;top:933.33px;font-size:12.6px;line-height:12.6px;font-weight:400;color:#333;">Others</div>
<div class="a" style="left:1773.5px;top:933.33px;font-size:12.6px;line-height:12.6px;font-weight:400;color:#333;">MultiPolygon</div>
<div class="a" style="left:724.5px;top:963.33px;font-size:12.6px;line-height:12.6px;font-weight:400;color:#333;">41550</div>
<div class="a" style="left:923.5px;top:963.33px;font-size:12.6px;line-height:12.6px;font-weight:400;color:#333;">4¢550</div>
<div class="a" style="right:672.5px;top:963.33px;font-size:12.6px;line-height:12.6px;font-weight:400;color:#333;text-align:right;">0</div>
<div class="a" style="left:1263.5px;top:963.33px;font-size:12.6px;line-height:12.6px;font-weight:400;color:#333;">41550</div>
<div class="a" style="right:332.5px;top:963.33px;font-size:12.6px;line-height:12.6px;font-weight:400;color:#333;text-align:right;">211</div>
<div class="a" style="left:1603.5px;top:963.33px;font-size:12.6px;line-height:12.6px;font-weight:400;color:#333;">Others</div>
<div class="a" style="left:1773.5px;top:963.33px;font-size:12.6px;line-height:12.6px;font-weight:400;color:#333;">Polygon</div>
<div class="a" style="left:1907px;top:684px;width:4px;height:66px;background:#dcdcdc"></div>
<div class="a" style="left:712px;top:973px;width:1172px;height:6px;background:#dcdcdc"></div>
<div class="a" style="left:0px;top:979px;width:1911px;height:31px;background:#e6e6e6"></div>
<div class="a" style="left:0px;top:979px;width:1911px;height:1px;background:#cdcdcd"></div>
<div class="a" style="left:0px;top:1009px;width:1911px;height:1px;background:#d4d4d4"></div>
<div class="a" style="left:0px;top:980px;width:124px;height:29px;background:#fafafa"></div>
<div class="a" style="left:124px;top:980px;width:1px;height:29px;background:#d2d2d2"></div>
<div class="a" style="left:186px;top:980px;width:1px;height:29px;background:#d2d2d2"></div>
<div class="a" style="left:260px;top:980px;width:1px;height:29px;background:#d2d2d2"></div>
<div class="a" style="left:317px;top:980px;width:1px;height:29px;background:#d2d2d2"></div>
<div class="a" style="left:419px;top:980px;width:1px;height:29px;background:#d2d2d2"></div>
<div class="a" style="left:490px;top:980px;width:1px;height:29px;background:#d2d2d2"></div>
<div class="a" style="left:522px;top:980px;width:1px;height:29px;background:#d2d2d2"></div>
<div class="a" style="left:554px;top:980px;width:1px;height:29px;background:#d2d2d2"></div>
<div class="a" style="left:586px;top:980px;width:1px;height:29px;background:#d2d2d2"></div>
<svg class="a" style="left:4px;top:988px;" width="8" height="12" viewBox="0 0 8 12"><ellipse cx="4" cy="2.2" rx="3.3" ry="1.7" fill="none" stroke="#555" stroke-width="1"/><path d="M0.7 2.2v7.6a3.3 1.7 0 0 0 6.6 0V2.2" fill="none" stroke="#555" stroke-width="1"/></svg>
<div class="a" style="left:18.3px;top:987.93px;font-size:12.6px;line-height:12.6px;font-weight:400;color:#444;-webkit-text-stroke:0.35px #444;-webkit-text-stroke:0.5px #444">Data Source</div>
<div class="a" style="left:131.1px;top:989.57px;font-size:11.5px;line-height:11.5px;font-weight:400;color:#5a5a5a;">PT_DDC</div>
<div class="a" style="left:192.3px;top:989.14px;font-size:12px;line-height:12px;font-weight:400;color:#5a5a5a;">Bar_Graph</div>
<div class="a" style="left:266.3px;top:989.14px;font-size:12px;line-height:12px;font-weight:400;color:#5a5a5a;">Sheet 3</div>
<svg class="a" style="left:324.5px;top:987.5px;" width="12" height="12" viewBox="0 0 12 12"><rect x="0.6" y="0.6" width="10.6" height="10.4" rx="1" fill="none" stroke="#606060" stroke-width="1.1"/><path d="M5.9 0.6v10.4M0.6 5.8h10.6" stroke="#606060" stroke-width="1.1"/></svg>
<div class="a" style="left:341.5px;top:988.93px;font-size:11.9px;line-height:11.9px;font-weight:400;color:#5a5a5a;">Dashboard 1</div>
<svg class="a" style="left:426.5px;top:987.5px;" width="12" height="13" viewBox="0 0 12 13"><path d="M0.6 1.2l5.2 2v9.2l-5.2-2z M11.2 1.2l-5.4 2v9.2l5.4-2z" fill="none" stroke="#606060" stroke-width="1.1" stroke-linejoin="round"/></svg>
<div class="a" style="left:443.6px;top:988.84px;font-size:12px;line-height:12px;font-weight:400;color:#5a5a5a;">Story 1</div>
<svg class="a" style="left:499.5px;top:987.5px;" width="17" height="16" viewBox="0 0 17 16"><path d="M8 10.6H0.6V0.6h10.6V7" fill="none" stroke="#606060" stroke-width="1.1"/><path d="M5 8V5M7 8V3.5M9 8V5.5" stroke="#606060" stroke-width="1"/><path d="M8.1 11.2h7.2M11.7 7.6v7.2" stroke="#555" stroke-width="1.9"/></svg>
<svg class="a" style="left:531.5px;top:987.5px;" width="17" height="16" viewBox="0 0 17 16"><path d="M8 10.6H0.6V0.6h10.6V7M5.9 0.6v10M0.6 5.8h10.6" fill="none" stroke="#606060" stroke-width="1.1"/><path d="M8.1 11.2h7.2M11.7 7.6v7.2" stroke="#555" stroke-width="1.9"/></svg>
<svg class="a" style="left:563.5px;top:987.5px;" width="17" height="16" viewBox="0 0 17 16"><path d="M0.6 1.2l4.6 2v9l-4.6-2z M5.2 3.2l4.6-2V7" fill="none" stroke="#606060" stroke-width="1.1" stroke-linejoin="round"/><path d="M8.1 11.2h7.2M11.7 7.6v7.2" stroke="#555" stroke-width="1.9"/></svg>
<div class="a" style="left:0px;top:1010px;width:1911px;height:20px;background:#ececec"></div>
<div class="a" style="left:1547px;top:1010px;width:1px;height:20px;background:#d2d2d2"></div>
<div class="a" style="left:1674px;top:1010px;width:1px;height:20px;background:#d2d2d2"></div>
<div class="a" style="left:1701px;top:1010px;width:1px;height:20px;background:#d2d2d2"></div>
<div class="a" style="left:1728px;top:1010px;width:1px;height:20px;background:#d2d2d2"></div>
<div class="a" style="left:1775px;top:1010px;width:1px;height:20px;background:#d2d2d2"></div>
<div class="a" style="left:1846px;top:1010px;width:1px;height:20px;background:#d2d2d2"></div>
<svg class="a" style="left:1784px;top:1016.5px;" width="6" height="6" viewBox="0 0 6 6"><path d="M0.5 0v6" stroke="#b0b0b0"/><path d="M5 0.3v5.4l-3.6-2.7z" fill="#b0b0b0"/></svg>
<svg class="a" style="left:1800px;top:1016.5px;" width="5" height="6" viewBox="0 0 5 6"><path d="M4.2 0.3v5.4l-3.6-2.7z" fill="#b4b4b4"/></svg>
<svg class="a" style="left:1817px;top:1016.5px;" width="5" height="6" viewBox="0 0 5 6"><path d="M0.6 0.3v5.4l3.6-2.7z" fill="#b4b4b4"/></svg>
<svg class="a" style="left:1831px;top:1016.5px;" width="6" height="6" viewBox="0 0 6 6"><path d="M0.6 0.3v5.4l3.6-2.7z" fill="#b0b0b0"/><path d="M5 0v6" stroke="#b0b0b0"/></svg>
<svg class="a" style="left:1855px;top:1014px;" width="12" height="12" viewBox="0 0 12 12"><rect width="12" height="12" fill="#c8c8c8"/><path d="M4 0v12M8 0v12M0 4h12M0 8h12" stroke="#e0e0e0" stroke-width="0.8"/></svg>
<svg class="a" style="left:1876px;top:1014px;" width="12" height="12" viewBox="0 0 12 12"><rect width="12" height="12" fill="#bdbdbd"/><path d="M6 0v12M0 6h12" stroke="#d8d8d8" stroke-width="0.8"/></svg>
<div class="a" style="left:1897px;top:1014px;width:12px;height:12px;background:#5a5a5a"></div>
<div class="a" style="left:0px;top:1030px;width:1911px;height:2px;background:#2a2624"></div>
</body></html>
